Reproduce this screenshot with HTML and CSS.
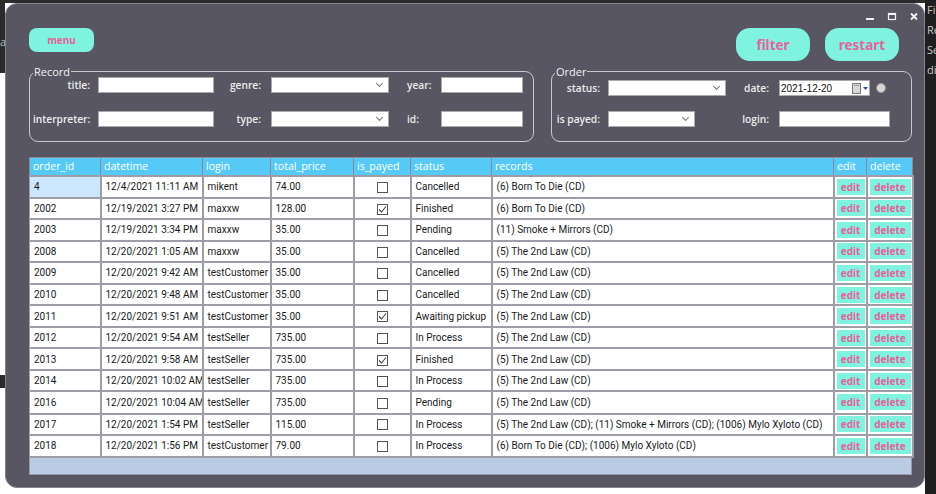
FILE: index.html
```html
<!DOCTYPE html>
<html lang="en">
<head>
  <meta charset="UTF-8" />
  <title>Orders</title>
  <link rel="stylesheet" href="styles.css">
</head>
<body>
  <div class="desktop">
    <div class="gutter-left"><span>a</span></div>

    <div class="window">
      <!-- window controls -->
      <div class="titlebar">
        <svg width="10" height="10" viewBox="0 0 10 10"><rect x="1" y="6" width="8" height="2" fill="#f2f2f2"/></svg>
        <svg width="10" height="10" viewBox="0 0 10 10"><rect x="1.5" y="1.5" width="7" height="6" fill="none" stroke="#f2f2f2" stroke-width="1.2"/><rect x="1" y="1" width="8" height="2" fill="#f2f2f2"/></svg>
        <svg width="10" height="10" viewBox="0 0 10 10"><path d="M2 1.5 L8 7.5 M8 1.5 L2 7.5" stroke="#f2f2f2" stroke-width="1.8"/></svg>
      </div>

      <div class="toolbar">
        <button class="btn btn-menu">menu</button>
        <div class="toolbar-actions">
          <button class="btn btn-big">filter</button>
          <button class="btn btn-big">restart</button>
        </div>
      </div>

      <!-- FILTERS -->
      <div class="filters">
        <div class="group group-record">
          <span class="group-title">Record</span>
          <div class="record-grid">
            <label class="lbl">title:</label>
            <div class="field"></div>
            <label class="lbl lbl-mid">genre:</label>
            <div class="field select"><span class="chev"></span></div>
            <label class="lbl lbl-left">year:</label>
            <div class="field"></div>

            <label class="lbl">interpreter:</label>
            <div class="field"></div>
            <label class="lbl lbl-mid">type:</label>
            <div class="field select"><span class="chev"></span></div>
            <label class="lbl lbl-left">id:</label>
            <div class="field"></div>
          </div>
        </div>

        <div class="group group-order">
          <span class="group-title">Order</span>
          <div class="order-grid">
            <label class="lbl">status:</label>
            <div class="field select"><span class="chev"></span></div>
            <label class="lbl lbl-mid">date:</label>
            <div class="date-wrap">
              <div class="field date">
                <span>2021-12-20</span>
                <span class="cal">
                  <svg width="18" height="11" viewBox="0 0 18 11"><rect x="1.5" y="0.5" width="8" height="10" fill="#d8d8d8" stroke="#7a7a7a"/><rect x="3" y="2" width="5" height="1" fill="#9a9a9a"/><path d="M12 4 L17 4 L14.5 7 Z" fill="#2d4f8f"/></svg>
                </span>
              </div>
              <span class="radio"></span>
            </div>

            <label class="lbl">is payed:</label>
            <div class="field select short"><span class="chev"></span></div>
            <label class="lbl lbl-mid">login:</label>
            <div class="field"></div>
          </div>
        </div>
      </div>

      <!-- ORDERS TABLE -->
      <div class="orders">
        <table class="orders-table">
          <colgroup>
            <col style="width:71px"><col style="width:102px"><col style="width:68px">
            <col style="width:83px"><col style="width:57px"><col style="width:81px">
            <col style="width:342px"><col style="width:33px"><col style="width:46px">
          </colgroup>
          <thead>
            <tr>
              <th>order_id</th><th>datetime</th><th>login</th><th>total_price</th>
              <th>is_payed</th><th>status</th><th>records</th><th>edit</th><th>delete</th>
            </tr>
          </thead>
          <tbody id="linhas"></tbody>
        </table>
        <div class="orders-footer"></div>
      </div>
    </div>

    <div class="gutter-right">
      <span>Fi</span><span>Re</span><span>Se</span><span>di</span>
    </div>
  </div>

  <script>
    const pedidos = [
      [4, '12/4/2021 11:11 AM', 'mikent', '74.00', false, 'Cancelled', '(6) Born To Die (CD)'],
      [2002, '12/19/2021 3:27 PM', 'maxxw', '128.00', true, 'Finished', '(6) Born To Die (CD)'],
      [2003, '12/19/2021 3:34 PM', 'maxxw', '35.00', false, 'Pending', '(11) Smoke + Mirrors (CD)'],
      [2008, '12/20/2021 1:05 AM', 'maxxw', '35.00', false, 'Cancelled', '(5) The 2nd Law (CD)'],
      [2009, '12/20/2021 9:42 AM', 'testCustomer', '35.00', false, 'Cancelled', '(5) The 2nd Law (CD)'],
      [2010, '12/20/2021 9:48 AM', 'testCustomer', '35.00', false, 'Cancelled', '(5) The 2nd Law (CD)'],
      [2011, '12/20/2021 9:51 AM', 'testCustomer', '35.00', true, 'Awaiting pickup', '(5) The 2nd Law (CD)'],
      [2012, '12/20/2021 9:54 AM', 'testSeller', '735.00', false, 'In Process', '(5) The 2nd Law (CD)'],
      [2013, '12/20/2021 9:58 AM', 'testSeller', '735.00', true, 'Finished', '(5) The 2nd Law (CD)'],
      [2014, '12/20/2021 10:02 AM', 'testSeller', '735.00', false, 'In Process', '(5) The 2nd Law (CD)'],
      [2016, '12/20/2021 10:04 AM', 'testSeller', '735.00', false, 'Pending', '(5) The 2nd Law (CD)'],
      [2017, '12/20/2021 1:54 PM', 'testSeller', '115.00', false, 'In Process', '(5) The 2nd Law (CD); (11) Smoke + Mirrors (CD); (1006) Mylo Xyloto (CD)'],
      [2018, '12/20/2021 1:56 PM', 'testCustomer', '79.00', false, 'In Process', '(6) Born To Die (CD); (1006) Mylo Xyloto (CD)']
    ];

    const corpo = document.getElementById('linhas');
    const check = '<svg width="9" height="9" viewBox="0 0 9 9"><path d="M1 4.5 L3.5 7 L8 1.5" fill="none" stroke="#444" stroke-width="1.1"/></svg>';

    pedidos.forEach((p, i) => {
      const tr = document.createElement('tr');
      tr.innerHTML = `
        <td class="${i === 0 ? 'selected' : ''}">${p[0]}</td>
        <td>${p[1]}</td>
        <td>${p[2]}</td>
        <td>${p[3]}</td>
        <td class="center"><span class="checkbox">${p[4] ? check : ''}</span></td>
        <td>${p[5]}</td>
        <td>${p[6]}</td>
        <td class="cell-btn"><button class="row-btn">edit</button></td>
        <td class="cell-btn"><button class="row-btn">delete</button></td>
      `;
      corpo.appendChild(tr);
    });
  </script>
</body>
</html>
```

FILE: styles.css
```css
* {
  margin: 0;
  padding: 0;
  box-sizing: border-box;
}

body {
  font-family: 'Open Sans', 'Noto Sans', sans-serif;
  background: #fff;
  height: 494px;
  overflow: hidden;
}

.desktop {
  display: flex;
  height: 494px;
  background: linear-gradient(#2b2b2b, #2b2b2b) left top / 100% 3px no-repeat;
}

.gutter-left {
  width: 5px;
  background:
    linear-gradient(#2b2b2b, #2b2b2b) left top / 100% 73px no-repeat,
    linear-gradient(#2b2b2b, #2b2b2b) 0 375px / 100% 13px no-repeat;
  overflow: hidden;
  font-size: 11px;
  color: #bdbdbd;
  padding-top: 34px;
}

.gutter-right {
  width: 11px;
  background: #1f1f1f;
  display: flex;
  flex-direction: column;
  gap: 5px;
  padding: 2px 0 0 2px;
  font-size: 11px;
  color: #c9c9c9;
  overflow: hidden;
  white-space: nowrap;
}

.window {
  width: 920px;
  height: 485px;
  margin-top: 3px;
  background: #595663;
  border: 1px solid #85828d;
  border-radius: 12px;
  padding: 0 12px 0 23px;
  display: flex;
  flex-direction: column;
}

.titlebar {
  height: 24px;
  display: flex;
  justify-content: flex-end;
  align-items: center;
  gap: 12px;
  margin-right: -7px;
  padding-top: 2px;
}

.toolbar {
  display: flex;
  justify-content: space-between;
  align-items: flex-start;
  padding-right: 13px;
  height: 33px;
}

.toolbar-actions {
  display: flex;
  gap: 15px;
}

.btn {
  border: none;
  background: #7ff3df;
  color: #e4649c;
  font-family: 'Noto Sans', sans-serif;
  font-weight: bold;
  cursor: pointer;
}

.btn-menu {
  width: 65px;
  height: 24px;
  border-radius: 8px;
  font-size: 10px;
}

.btn-big {
  width: 74px;
  height: 33px;
  border-radius: 14px;
  font-size: 13.5px;
}

/* FILTROS */
.filters {
  display: flex;
  gap: 17px;
  margin-top: 10px;
  height: 71px;
}

.group {
  position: relative;
  border: 1px solid #c9c7cf;
  border-radius: 9px;
  height: 71px;
}

.group-title {
  position: absolute;
  top: -8px;
  left: 3px;
  padding: 0 1px;
  background: #595663;
  color: #f0f0f0;
  font-size: 11px;
  line-height: 15px;
}

.group-record {
  width: 505px;
  padding: 5px 0 0 3px;
}

.group-order {
  width: 361px;
  padding: 8px 0 0 0;
}

.record-grid {
  display: grid;
  grid-template-columns: 65px 116px 57px 118px 52px 82px;
  grid-template-rows: 16px 16px;
  row-gap: 18px;
  align-items: center;
}

.order-grid {
  display: grid;
  grid-template-columns: 56px 118px 53px 111px;
  grid-template-rows: 16px 16px;
  row-gap: 15px;
  align-items: center;
}

.lbl {
  color: #ebebeb;
  font-size: 10.2px;
  font-weight: 600;
  text-align: right;
  padding-right: 8px;
  white-space: nowrap;
}

.lbl-mid {
  padding-right: 10px;
}

.lbl-left {
  text-align: left;
  padding-left: 18px;
}

.field {
  height: 16px;
  background: #fff;
  border: 1px solid #a9a9a9;
  position: relative;
}

.select .chev {
  position: absolute;
  right: 6px;
  top: 3px;
  width: 5px;
  height: 5px;
  border-right: 1px solid #777;
  border-bottom: 1px solid #777;
  transform: rotate(45deg);
}

.short {
  width: 87px;
}

.date-wrap {
  display: flex;
  align-items: center;
  gap: 6px;
}

.date {
  width: 91px;
  display: flex;
  align-items: center;
  justify-content: space-between;
  font-family: 'Liberation Sans', sans-serif;
  font-size: 10px;
  color: #111;
  padding-left: 1px;
}

.cal {
  display: flex;
}

.radio {
  width: 10px;
  height: 10px;
  border-radius: 50%;
  background: #d4d4d4;
  border: 1px solid #9a9a9a;
}

/* TABELA */
.orders {
  margin-top: 15px;
  width: 883px;
}

.orders-table {
  width: 883px;
  border-collapse: collapse;
  table-layout: fixed;
  font-family: Roboto, 'Open Sans', sans-serif;
  font-size: 10px;
  color: #1a1a1a;
}

.orders-table th {
  background: #56c9f7;
  color: #fff;
  font-family: 'Open Sans', sans-serif;
  font-weight: normal;
  font-size: 10.6px;
  text-align: left;
  height: 18px;
  padding: 0 3px;
  border: 1px solid #8a8a94;
  white-space: nowrap;
  overflow: hidden;
}

.orders-table td {
  background: #fff;
  height: 21.1px;
  line-height: 14px;
  padding: 1px 4px 0;
  border: 1px solid #9e9ca6;
  border-width: 2px 2px 0 1px;
  white-space: nowrap;
  overflow: hidden;
}

/* linhas alternam 22/21px */
.orders-table tbody tr:nth-child(odd) td {
  height: 22.1px;
}

.orders-table tbody tr:last-child td {
  border-bottom-width: 2px;
}

.orders-table td.selected {
  background: #cce6fb;
}

.orders-table td.center {
  text-align: center;
}

.checkbox {
  display: inline-flex;
  align-items: center;
  justify-content: center;
  width: 11px;
  height: 11px;
  border: 1px solid #555;
  background: #fff;
  vertical-align: middle;
}

.orders-table td.cell-btn {
  padding: 1px 1px 1px 2px;
}

.row-btn {
  display: block;
  width: 100%;
  height: 16px;
  border: none;
  background: #7ff3df;
  color: #e4649c;
  font-family: 'Noto Sans', sans-serif;
  font-weight: bold;
  font-size: 10px;
  cursor: pointer;
}

.orders-footer {
  height: 17px;
  background: #b9cce4;
  border: 1px solid #9b99a3;
  border-top: none;
}
```
